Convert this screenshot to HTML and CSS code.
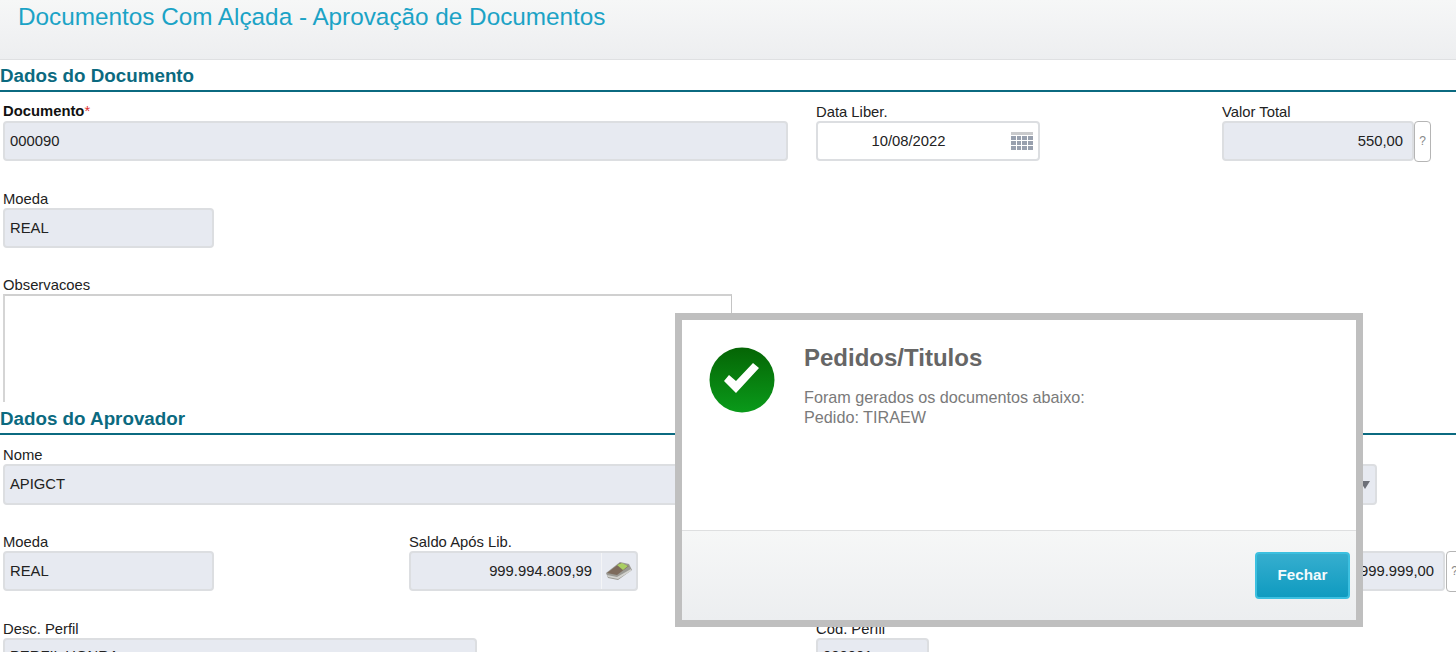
FILE: index.html
```html
<!DOCTYPE html>
<html lang="pt-BR">
<head>
    <meta charset="UTF-8">
    <title>Documentos Com Alçada</title>
    <link rel="stylesheet" href="styles.css">
</head>
<body>
    <header class="page-header">
        <h1>Documentos Com Alçada - Aprovação de Documentos</h1>
    </header>

    <!-- Dados do Documento -->
    <h2 class="section-title">Dados do Documento</h2>
    <div class="form-row row-first">
        <div class="field field-doc">
            <label class="req">Documento<span class="star">*</span></label>
            <div class="input">000090</div>
        </div>
        <div class="field field-date">
            <label>Data Liber.</label>
            <div class="input input-white">
                <span class="date-value">10/08/2022</span>
                <svg class="cal-icon" width="22" height="18" viewBox="0 0 22 18">
                    <path fill="#c9cacc" d="M0 0h22v3H0z"/>
                    <path fill="#98a0ae" d="M0 4h5v4H0zM6 4h4v4H6zM11 4h5v4h-5zM17 4h5v4h-5zM0 9h5v4H0zM6 9h4v4H6zM11 9h5v4h-5zM17 9h5v4h-5zM0 14h5v4H0zM6 14h4v4H6zM11 14h5v4h-5zM17 14h5v4h-5z"/>
                </svg>
            </div>
        </div>
        <div class="field field-total">
            <label>Valor Total</label>
            <div class="with-help">
                <div class="input input-right">550,00</div>
                <span class="help">?</span>
            </div>
        </div>
    </div>
    <div class="form-row">
        <div class="field field-moeda">
            <label>Moeda</label>
            <div class="input">REAL</div>
        </div>
    </div>
    <div class="form-row row-obs">
        <div class="field field-obs">
            <label>Observacoes</label>
            <div class="textarea"></div>
        </div>
    </div>

    <!-- Dados do Aprovador -->
    <h2 class="section-title">Dados do Aprovador</h2>
    <div class="form-row row-aprov">
        <div class="field field-doc">
            <label>Nome</label>
            <div class="input">APIGCT</div>
        </div>
        <div class="field field-select">
            <label></label>
            <div class="input input-select"><span class="arrow"></span></div>
        </div>
    </div>
    <div class="form-row">
        <div class="field field-moeda">
            <label>Moeda</label>
            <div class="input">REAL</div>
        </div>
        <div class="field field-saldo">
            <label>Saldo Após Lib.</label>
            <div class="input input-right input-addon">
                <span class="addon-value">999.994.809,99</span>
                <span class="addon">
                    <svg width="26" height="20" viewBox="0 0 26 20">
                        <path fill="#9b9a94" d="M0 12 14 1l9 2 3 6-14 10-10-2z"/>
                        <path fill="#d2d2ce" d="m1 14 10 2 14-8v2L12 18 2 16z"/>
                        <path fill="#7d6b5c" d="M1 12 14 2l9 3-12 9z"/>
                        <path fill="#a9cf63" d="m11 4 5-2 6 3-5 4z"/>
                    </svg>
                </span>
            </div>
        </div>
        <div class="field field-limite">
            <label></label>
            <div class="with-help">
                <div class="input input-right">999.999,00</div>
                <span class="help">?</span>
            </div>
        </div>
    </div>
    <div class="form-row row-last">
        <div class="field field-perfil">
            <label>Desc. Perfil</label>
            <div class="input">PERFIL HONRA</div>
        </div>
        <div class="field field-cod">
            <label>Cod. Perfil</label>
            <div class="input">000001</div>
        </div>
    </div>

    <!-- Modal -->
    <div class="modal">
        <div class="modal-body">
            <svg class="ok-icon" width="66" height="66" viewBox="0 0 66 66">
                <defs>
                    <linearGradient id="okGrad" x1="0" y1="0" x2="0" y2="1">
                        <stop offset="0" stop-color="#056505"/>
                        <stop offset="1" stop-color="#0a9a1a"/>
                    </linearGradient>
                </defs>
                <circle cx="33" cy="33" r="32.500" fill="url(#okGrad)"/>
                <path fill="#fff" d="m15 34 5-6 7 6 17-18 6 5-23 25z"/>
            </svg>
            <div class="modal-text">
                <h3>Pedidos/Titulos</h3>
                <p>Foram gerados os documentos abaixo:<br>Pedido: TIRAEW</p>
            </div>
        </div>
        <div class="modal-footer">
            <button class="btn-close">Fechar</button>
        </div>
    </div>
</body>
</html>
```

FILE: styles.css
```css
* {
    margin: 0;
    padding: 0;
    box-sizing: border-box;
}

html, body {
    height: 652px;
    overflow: hidden;
}

body {
    font-family: 'Liberation Sans', Arial, sans-serif;
    font-size: 14.8px;
    color: #222;
    background-color: #fff;
    position: relative;
}

.page-header {
    height: 60px;
    padding: 3px 18px 0;
    background: linear-gradient(#f6f7f7, #edeef0);
    border-bottom: 1px solid #dfe0e2;
}

.page-header h1 {
    font-size: 24.3px;
    font-weight: normal;
    color: #1ba3c6;
    line-height: 28px;
}

.section-title {
    font-size: 18.800px;
    line-height: 20px;
    height: 26px;
    color: #0b6a80;
    border-bottom: 2px solid #0b6a80;
    margin-top: 6px;
}

.form-row {
    display: flex;
    padding-left: 3px;
    margin-bottom: 27px;
}

.row-first {
    margin-top: 9.8px;
}

.row-obs {
    margin-bottom: 7px;
}

.row-aprov {
    margin-top: 10.4px;
}

.row-last .input {
    line-height: 33px;
}

.field label {
    display: block;
    line-height: 21px;
    height: 19px;
    color: #222;
}

.field .req {
    font-weight: bold;
    line-height: 18px;
    color: #111;
}

.star {
    color: #e0312f;
    font-weight: normal;
}

.input {
    height: 40.5px;
    line-height: 37px;
    padding: 0 5px;
    background-color: #e7eaf1;
    border: 2px solid #dcdee1;
    border-radius: 4px;
}

.input-white {
    background-color: #fff;
    display: flex;
    align-items: center;
}

.input-right {
    text-align: right;
    padding-right: 9px;
}

.date-value {
    flex: 1;
    text-align: center;
    margin-right: 17px;
}

.field-doc {
    width: 785px;
    margin-right: 28px;
    flex: none;
}

.field-date {
    width: 224px;
    margin-right: 182px;
    flex: none;
}

.field-total {
    width: 209px;
    flex: none;
}

.with-help {
    display: flex;
}

.with-help .input {
    flex: 1;
}

.help {
    width: 17px;
    height: 41px;
    line-height: 38px;
    text-align: center;
    color: #888;
    font-size: 12px;
    border: 1.5px solid #b5b5b5;
    border-radius: 4px;
    flex: none;
}

.field-limite .with-help {
    gap: 1px;
}

.field-moeda {
    width: 211px;
    flex: none;
}

.field-obs {
    width: 729px;
}

.textarea {
    height: 107.4px;
    border-top: 2px solid #d0d0d0;
    border-left: 2px solid #d5d5d5;
    border-right: 1px solid #c4c4c4;
}

.field-select {
    width: 561px;
    flex: none;
}

.input-select {
    position: relative;
}

.arrow {
    position: absolute;
    right: 5px;
    top: 15px;
    border-left: 5px solid transparent;
    border-right: 5px solid transparent;
    border-top: 8px solid #6d7078;
}

.field-saldo {
    width: 229px;
    margin-left: 195px;
    flex: none;
}

.input-addon {
    display: flex;
    padding: 0;
}

.addon-value {
    flex: 1;
    padding-right: 9px;
}

.addon {
    width: 35px;
    border-left: 1px solid #f4f5f7;
    display: flex;
    align-items: center;
    justify-content: center;
}

.field-limite {
    width: 241px;
    margin-left: 584px;
    flex: none;
}

.field-perfil {
    width: 474px;
    margin-right: 339px;
    flex: none;
}

.field-cod {
    width: 113px;
    flex: none;
}

/* Janela de mensagem */
.modal {
    position: absolute;
    left: 675px;
    top: 313px;
    width: 688px;
    height: 314px;
    border: 7px solid #bfbfbf;
    background-color: #fff;
    display: flex;
    flex-direction: column;
}

.modal-body {
    flex: 1;
    display: flex;
    padding: 27px 27px 0;
    gap: 29px;
}

.ok-icon {
    flex: none;
}

.modal-text {
    margin-top: -1px;
    color: #7a7a7a;
}

.modal-text h3 {
    font-size: 24px;
    line-height: 24px;
    margin-bottom: 17px;
    color: #666;
}

.modal-text p {
    font-size: 16.2px;
    line-height: 20px;
}

.modal-footer {
    height: 90px;
    background: linear-gradient(#f6f7f7, #eceef0);
    border-top: 1px solid #dedfe0;
    padding: 21px 6px 0 0;
    display: flex;
    justify-content: flex-end;
    align-items: flex-start;
}

.btn-close {
    width: 95px;
    height: 47px;
    padding-bottom: 2px;
    font-family: inherit;
    font-size: 15.2px;
    font-weight: bold;
    color: #f4fbfd;
    background: linear-gradient(#36aecf, #0f9bc0);
    border: 2px solid #3cc0e0;
    border-radius: 4px;
}
```
